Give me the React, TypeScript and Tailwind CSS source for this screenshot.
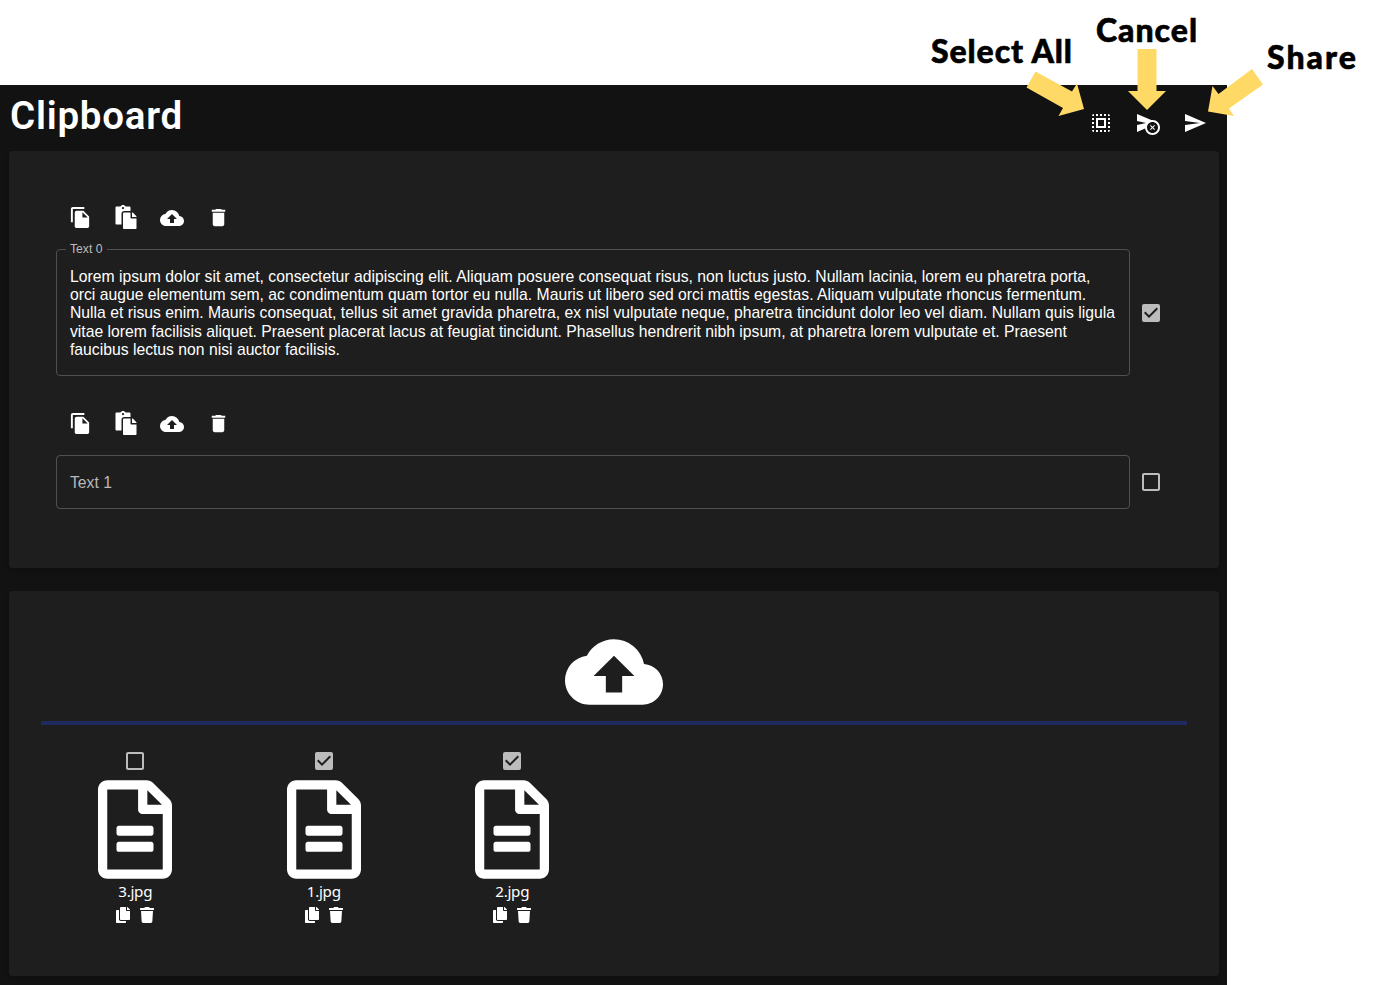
import React from "react";
import {
  MdSelectAll,
  MdCancelScheduleSend,
  MdSend,
  MdFileCopy,
  MdCloudUpload,
  MdDelete,
  MdCheckBox,
  MdCheckBoxOutlineBlank,
} from "react-icons/md";
import { FaPaste, FaRegFileAlt, FaCopy, FaTrash } from "react-icons/fa";

const lines: string[] = [
  "Lorem ipsum dolor sit amet, consectetur adipiscing elit. Aliquam posuere consequat risus, non luctus justo. Nullam lacinia, lorem eu pharetra porta,",
  "orci augue elementum sem, ac condimentum quam tortor eu nulla. Mauris ut libero sed orci mattis egestas. Aliquam vulputate rhoncus fermentum.",
  "Nulla et risus enim. Mauris consequat, tellus sit amet gravida pharetra, ex nisl vulputate neque, pharetra tincidunt dolor leo vel diam. Nullam quis ligula",
  "vitae lorem facilisis aliquet. Praesent placerat lacus at feugiat tincidunt. Phasellus hendrerit nibh ipsum, at pharetra lorem vulputate et. Praesent",
  "faucibus lectus non nisi auctor facilisis.",
];

function Check({ checked }: { checked: boolean }) {
  const Icon = checked ? MdCheckBox : MdCheckBoxOutlineBlank;
  return <Icon className="size-6 text-[#bcbcbc]" />;
}

function Toolbar() {
  return (
    <div className="ml-px flex h-[46px]">
      <button className="flex w-[46px] items-center justify-center pl-px"><MdFileCopy className="size-[23px]" /></button>
      <button className="flex w-[46px] items-center justify-center pr-px"><FaPaste className="size-[24px]" /></button>
      <button className="flex w-[46px] items-center justify-center pt-px pr-px"><MdCloudUpload className="size-6" /></button>
      <button className="flex w-[47px] items-center justify-center"><MdDelete className="size-[23px]" /></button>
    </div>
  );
}

function FileItem({ name, checked }: { name: string; checked: boolean }) {
  return (
    <div className="flex w-[188.5px] flex-col items-center">
      <Check checked={checked} />
      <FaRegFileAlt className="mt-[7px] h-[99px] w-[74px]" />
      <div className="mt-[2px] h-[21px] font-['Noto_Sans',sans-serif] text-[15.2px] leading-[21px] tracking-[-0.3px]">{name}</div>
      <div className="mt-[5px] flex gap-[8px]">
        <FaCopy className="size-4" />
        <FaTrash className="size-4" />
      </div>
    </div>
  );
}

const label =
  "absolute font-['Lato',sans-serif] text-[32px] leading-10 font-black whitespace-nowrap text-black [-webkit-text-stroke:0.6px_black]";

export default function App() {
  return (
    <div className="relative h-[985px] w-[1378px] overflow-hidden bg-white pt-[85px] font-['Liberation_Sans',sans-serif] text-white">
      <main className="flex h-[900px] w-[1227px] flex-col bg-[#121212] px-[9px]">
        <header className="flex h-[66px] items-start justify-between">
          <h1 className="mt-[6px] ml-px font-['Roboto',sans-serif] text-[38.5px] leading-[50px] font-semibold tracking-[0.75px]">Clipboard</h1>
          <div className="mt-[14px] -mr-[0.5px] flex">
            <button className="flex size-[47px] items-center justify-center"><MdSelectAll className="size-6" /></button>
            <button className="flex size-[47px] items-center justify-center"><MdCancelScheduleSend className="size-6" /></button>
            <button className="flex size-[47px] items-center justify-center"><MdSend className="size-6" /></button>
          </div>
        </header>

        <section className="h-[417px] w-[1210px] shrink-0 rounded bg-[#1e1e1e] pt-[43px] pl-[47px] shadow-md">
          <Toolbar />
          <div className="flex items-center">
            <fieldset className="mt-[2px] h-[134px] w-[1074px] rounded border border-[#505050] px-[13px]">
              <legend className="-ml-[4px] px-[4px] text-[12.2px] leading-[14px] text-[#bcbcbc]">Text 0</legend>
              <div className="mt-[11.8px] text-[15.72px] leading-[18.3px] whitespace-nowrap">
                {lines.map((line) => (
                  <div key={line}>{line}</div>
                ))}
              </div>
            </fieldset>
            <div className="mt-[9px] ml-[9px]"><Check checked /></div>
          </div>
          <div className="mt-[24px]"><Toolbar /></div>
          <div className="mt-[9px] flex items-center">
            <div className="flex h-[54px] w-[1074px] items-center rounded border border-[#505050] px-[13px] pt-[2px] text-[15.71px] text-[#b9b9b9]">Text 1</div>
            <div className="ml-[9px]"><Check checked={false} /></div>
          </div>
        </section>

        <section className="mt-[23px] flex h-[385px] w-[1210px] shrink-0 flex-col rounded bg-[#1e1e1e] px-8 pt-8 shadow-md">
          <MdCloudUpload className="size-[98px] self-center" />
          <div className="h-1 shrink-0 bg-[#1f295e]" />
          <div className="mt-[24px] flex">
            <FileItem name="3.jpg" checked={false} />
            <FileItem name="1.jpg" checked />
            <FileItem name="2.jpg" checked />
          </div>
        </section>
      </main>

      <div className={`${label} top-[31px] left-[931px] tracking-[0.9px]`}>Select All</div>
      <div className={`${label} top-[10px] left-[1096px] tracking-[1px]`}>Cancel</div>
      <div className={`${label} top-[37px] left-[1267px] tracking-[2px]`}>Share</div>
      <svg className="absolute top-0 left-[920px]" width="458" height="160" viewBox="0 0 458 160" fill="#ffd966">
        <path d="M115.500 71.500 152 91.500 157 83.500 164 109 138.500 116 143 108 106.500 87.500Z" />
        <path d="M217.500 49H236.500V91H246L227 110 208 91H217.500Z" />
        <path d="M332 69 343 84.500 309 108.500 314 116 288 111.500 292.500 86 298.500 94Z" />
      </svg>
    </div>
  );
}
